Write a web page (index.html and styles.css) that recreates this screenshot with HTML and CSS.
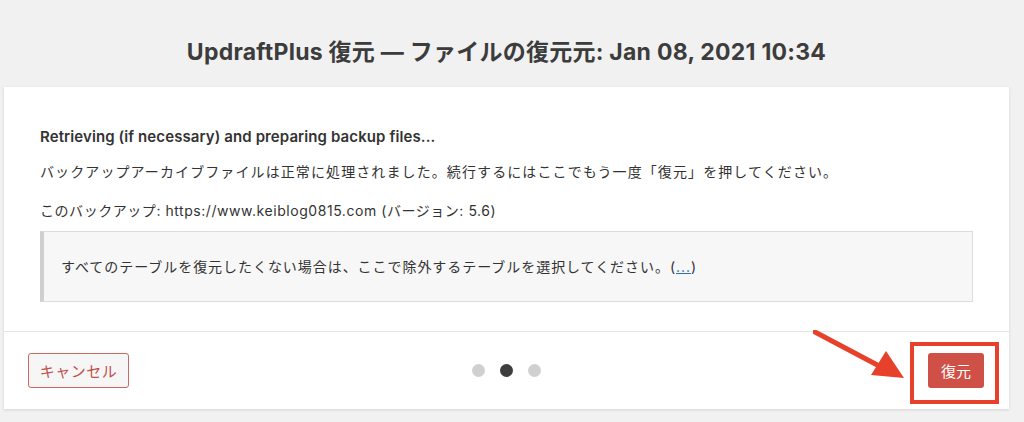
FILE: index.html
```html
<!DOCTYPE html>
<html lang="ja">
<head>
<meta charset="utf-8">
<link rel="stylesheet" href="styles.css">
</head>
<body>
<div class="page">
  <h1 class="title">UpdraftPlus 復元 — ファイルの復元元: Jan 08, 2021 10:34</h1>
  <div class="card">
    <div class="content">
      <p class="status">Retrieving (if necessary) and preparing backup files...</p>
      <p class="line">バックアップアーカイブファイルは正常に処理されました。続行するにはここでもう一度「復元」を押してください。</p>
      <p class="line line3">このバックアップ: https://www.keiblog0815.com (バージョン: 5.6)</p>
      <div class="notice">すべてのテーブルを復元したくない場合は、ここで除外するテーブルを選択してください。(<a href="#" class="more">...</a>)</div>
    </div>
    <div class="footer">
      <div class="left"><button class="btn-cancel">キャンセル</button></div>
      <div class="dots">
        <span class="dot"></span>
        <span class="dot active"></span>
        <span class="dot"></span>
      </div>
      <div class="right"><button class="btn-restore">復元</button></div>
      <svg class="arrow" width="100" height="56" viewBox="0 0 100 56">
        <line x1="2" y1="2" x2="70" y2="38" stroke="#e8412b" stroke-width="5" stroke-linecap="round"/>
        <polygon points="73,21 58,45 91,48" fill="#e8412b"/>
      </svg>
      <div class="highlight"></div>
    </div>
  </div>
</div>
</body>
</html>
```

FILE: styles.css
```css
html, body {
  margin: 0;
  padding: 0;
}
body {
  background: #f1f1f1;
  width: 1024px;
  height: 422px;
  overflow: hidden;
  font-family: "Inter", "Noto Sans CJK JP", sans-serif;
  color: #444;
}
.page {
  margin-left: 4px;
  width: 1005px;
}
.title {
  margin: 0;
  padding: 37px 0 0;
  height: 50px;
  text-align: center;
  font-size: 23px;
  font-weight: bold;
  color: #3c3c3c;
  line-height: 30px;
  letter-spacing: 0.25px;
}
.card {
  background: #fff;
  box-shadow: 0 1px 3px rgba(0,0,0,0.12);
}
.content {
  padding: 40px 36px 29px;
}
.content p {
  margin: 0;
  font-size: 14px;
  line-height: 20px;
}
.content p.status {
  font-weight: 600;
  font-size: 15px;
  letter-spacing: 0.1px;
  color: #333;
}
.line {
  margin-top: 15px !important;
  color: #333;
  letter-spacing: 1.1px;
}
.line.line3 {
  margin-top: 19px !important;
  letter-spacing: 0.55px;
}
.notice {
  margin-top: 10px;
  background: #f7f7f7;
  border: 1px solid #dcdcdc;
  border-left: 4px solid #cfcfcf;
  padding: 25px 0 24px 17px;
  font-size: 14px;
  line-height: 20px;
  color: #333;
  letter-spacing: 0.95px;
}
.more {
  color: #2a6fb0;
  text-decoration: underline;
}
.footer {
  position: relative;
  border-top: 1px solid #e5e5e5;
  height: 77px;
  display: grid;
  grid-template-columns: 1fr auto 1fr;
  align-items: center;
  padding: 0 25px 0 24px;
}
.right {
  display: flex;
  justify-content: flex-end;
}
.btn-cancel {
  width: 101px;
  height: 35px;
  border: 1px solid #c76a63;
  border-radius: 3px;
  background: #f6f6f6;
  color: #c0504a;
  font-family: "Noto Sans CJK JP", sans-serif;
  font-size: 15px;
  padding: 0;
  letter-spacing: 0.5px;
}
.dots {
  display: flex;
  gap: 15px;
}
.dot {
  width: 13px;
  height: 13px;
  border-radius: 50%;
  background: #d0d0d0;
}
.dot.active {
  background: #3d3d3d;
}
.btn-restore {
  width: 56px;
  height: 35px;
  border: none;
  border-radius: 3px;
  background: #cf5046;
  color: #fff;
  font-family: "Noto Sans CJK JP", sans-serif;
  font-size: 15px;
  padding: 0;
}
.highlight {
  position: absolute;
  left: 906px;
  top: 10px;
  width: 81px;
  height: 54px;
  border: 4px solid #e8412b;
}
.arrow {
  position: absolute;
  left: 809px;
  top: -2px;
}
```
